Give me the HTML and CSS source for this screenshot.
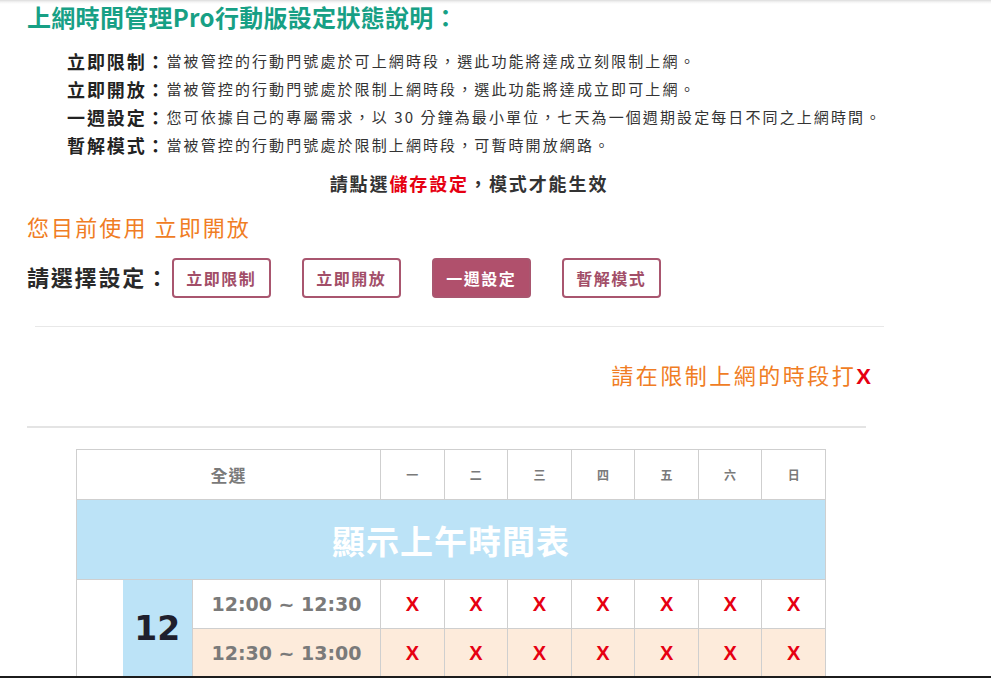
FILE: index.html
```html
<!DOCTYPE html>
<html lang="zh-Hant">
<head>
<meta charset="utf-8">
<title>上網時間管理Pro行動版設定</title>
<link rel="stylesheet" href="styles.css">
</head>
<body>
<div class="page">
  <h1 class="title">上網時間管理Pro行動版設定狀態說明：</h1>
  <ul class="desc">
    <li><b>立即限制：</b>當被管控的行動門號處於可上網時段，選此功能將達成立刻限制上網。</li>
    <li><b>立即開放：</b>當被管控的行動門號處於限制上網時段，選此功能將達成立即可上網。</li>
    <li><b>一週設定：</b>您可依據自己的專屬需求，以 30 分鐘為最小單位，七天為一個週期設定每日不同之上網時間。</li>
    <li><b>暫解模式：</b>當被管控的行動門號處於限制上網時段，可暫時開放網路。</li>
  </ul>
  <p class="notice">請點選<span class="red">儲存設定</span>，模式才能生效</p>
  <p class="current">您目前使用 立即開放</p>
  <div class="select-row">
    <span class="select-label">請選擇設定：</span>
    <button class="btn">立即限制</button>
    <button class="btn">立即開放</button>
    <button class="btn active">一週設定</button>
    <button class="btn">暫解模式</button>
  </div>
  <hr class="rule1">
  <p class="hint">請在限制上網的時段打<span class="hint-x">X</span></p>
  <hr class="rule2">
  <table class="sched">
    <colgroup>
      <col class="c1"><col class="c2"><col class="c3">
      <col><col><col><col><col><col><col>
    </colgroup>
    <tr class="head">
      <th colspan="3" class="all">全選</th>
      <th>一</th><th>二</th><th>三</th><th>四</th><th>五</th><th>六</th><th>日</th>
    </tr>
    <tr class="banner">
      <td colspan="10">顯示上午時間表</td>
    </tr>
    <tr class="slot">
      <td rowspan="2" class="blank"></td>
      <td rowspan="2" class="hour">12</td>
      <td class="time">12:00 ~ 12:30</td>
      <td class="x">X</td><td class="x">X</td><td class="x">X</td><td class="x">X</td><td class="x">X</td><td class="x">X</td><td class="x">X</td>
    </tr>
    <tr class="slot alt">
      <td class="time">12:30 ~ 13:00</td>
      <td class="x">X</td><td class="x">X</td><td class="x">X</td><td class="x">X</td><td class="x">X</td><td class="x">X</td><td class="x">X</td>
    </tr>
  </table>
</div>
<div class="frame-bottom"></div>
</body>
</html>
```

FILE: styles.css
```css
html, body {
  margin: 0;
  padding: 0;
}
body {
  background: #fff linear-gradient(to bottom, #dcdcdc 0, #f4f4f4 2px, #fff 4px) no-repeat;
  font-family: "DejaVu Sans", "Noto Sans CJK TC", sans-serif;
  color: #333;
  overflow: hidden;
}
.page {
  padding-top: 2px;
}
.title {
  margin: 0;
  padding-left: 27px;
  font-family: "Noto Sans CJK TC", sans-serif;
  font-size: 24px;
  line-height: 30px;
  font-weight: 700;
  color: #17a085;
  letter-spacing: 0.3px;
}
.desc {
  list-style: none;
  margin: 15px 0 0;
  padding-left: 67px;
}
.desc li {
  height: 28px;
  line-height: 28px;
  font-size: 15px;
  letter-spacing: 2.1px;
  color: #333;
  font-family: "Noto Sans CJK TC", sans-serif;
  white-space: nowrap;
}
.desc li b {
  font-size: 18px;
  letter-spacing: 1.9px;
  color: #222;
  font-weight: 700;
  vertical-align: top;
}
.notice {
  margin: 10px 0 0;
  width: 938px;
  text-align: center;
  line-height: 28px;
  font-family: "Noto Sans CJK TC", sans-serif;
  font-size: 18px;
  font-weight: 700;
  letter-spacing: 1.9px;
  color: #333;
}
.red {
  color: #e60012;
}
.current {
  margin: 14px 0 0;
  padding-left: 27px;
  line-height: 30px;
  font-family: "Noto Sans CJK TC", sans-serif;
  font-size: 22px;
  letter-spacing: 2.1px;
  color: #f07d24;
}
.select-row {
  margin-top: 17px;
  padding-left: 27px;
  display: flex;
  align-items: center;
  height: 40px;
}
.select-label {
  font-family: "Noto Sans CJK TC", sans-serif;
  font-size: 22px;
  font-weight: 700;
  letter-spacing: 1.8px;
  color: #2a2a2a;
  margin-right: 2px;
  margin-top: -5px;
}
.btn {
  width: 99px;
  height: 40px;
  margin-right: 31px;
  box-sizing: border-box;
  border: 2px solid #a9566f;
  border-radius: 4px;
  background: #fff;
  color: #a24e68;
  font-family: "Noto Sans CJK TC", sans-serif;
  font-size: 16px;
  font-weight: 700;
  letter-spacing: 1.5px;
  padding: 0;
}
.btn.active {
  background: #b0506c;
  color: #fff;
}
.rule1 {
  margin: 28px 0 0 35px;
  width: 849px;
  border: 0;
  border-top: 1px solid #e8e8e8;
  height: 0;
}
.hint {
  margin: 32px 0 0;
  width: 871px;
  text-align: right;
  line-height: 30px;
  font-family: "Noto Sans CJK TC", sans-serif;
  font-size: 22px;
  letter-spacing: 2.5px;
  color: #f07d24;
}
.hint-x {
  color: #e60012;
  font-weight: 700;
  font-family: "Liberation Sans", sans-serif;
  letter-spacing: 0;
}
.rule2 {
  margin: 34px 0 0 27px;
  width: 839px;
  border: 0;
  border-top: 2px solid #e4e4e4;
  height: 0;
}
.sched {
  margin: 21px 0 0 76px;
  width: 750px;
  border-collapse: collapse;
  table-layout: fixed;
}
.sched .c1 { width: 46px; }
.sched .c2 { width: 70px; }
.sched .c3 { width: 188px; }
.sched th, .sched td {
  border: 1px solid #cfcfcf;
  padding: 0;
  text-align: center;
}
.head th {
  height: 49px;
  color: #7a7a7a;
  font-family: "Noto Sans CJK TC", sans-serif;
  font-weight: 700;
  font-size: 12px;
}
.head th.all {
  font-size: 17px;
  letter-spacing: 1px;
}
.banner td {
  height: 79px;
  background: #bce3f7;
  color: #fff;
  font-family: "Noto Sans CJK TC", sans-serif;
  font-size: 33px;
  font-weight: 700;
  letter-spacing: 1px;
}
.slot td {
  height: 48px;
}
.slot td.blank {
  background: #fff;
  border-right: 0;
}
.slot td.hour {
  background: #bce3f7;
  border-left: 0;
  font-family: "DejaVu Sans", sans-serif;
  font-weight: 700;
  font-size: 33px;
  color: #1f1f2d;
}
.slot td.time {
  font-family: "DejaVu Sans", sans-serif;
  font-weight: 700;
  font-size: 19px;
  color: #7a7a7a;
}
.slot td.x {
  font-family: "Liberation Sans", sans-serif;
  font-weight: 700;
  font-size: 20px;
  color: #e60012;
}
.slot.alt td.time, .slot.alt td.x {
  background: #fdebdb;
}
.frame-bottom {
  position: fixed;
  left: 0;
  right: 0;
  bottom: 0;
  height: 2px;
  background: #1c1c1c;
}
```
